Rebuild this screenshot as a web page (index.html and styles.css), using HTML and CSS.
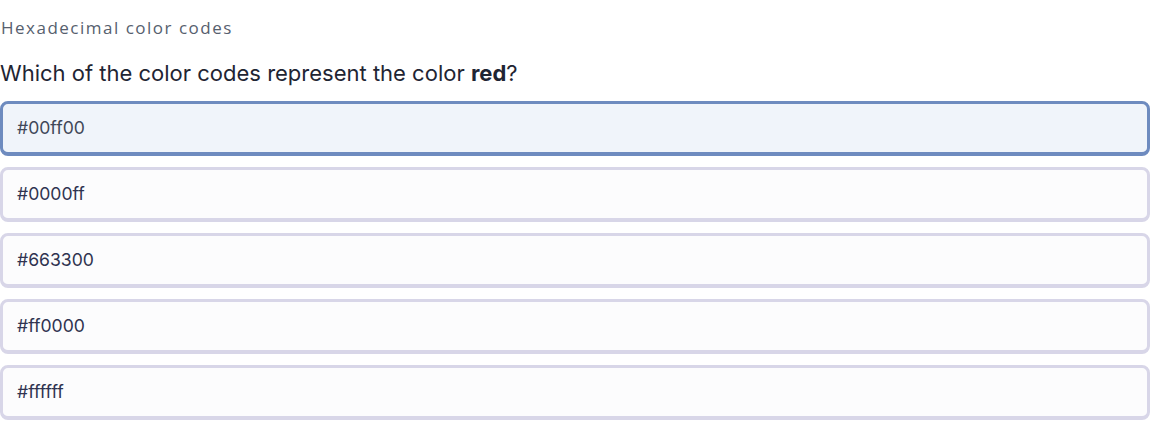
FILE: index.html
```html
<!DOCTYPE html>
<html lang="en">
<head>
<meta charset="utf-8">
<title>Hexadecimal color codes</title>
<link rel="stylesheet" href="styles.css">
</head>
<body>
<div class="quiz">
  <div class="topic">Hexadecimal color codes</div>
  <div class="question">Which of the color codes represent the color <strong>red</strong>?</div>
  <div class="options">
    <div class="option selected">#00ff00</div>
    <div class="option">#0000ff</div>
    <div class="option">#663300</div>
    <div class="option">#ff0000</div>
    <div class="option">#ffffff</div>
  </div>
</div>
</body>
</html>
```

FILE: styles.css
```css
html, body {
  margin: 0;
  padding: 0;
  background: #ffffff;
}

.quiz {
  width: 1150px;
  padding-top: 18px;
  font-family: Inter, "Liberation Sans", sans-serif;
}

.topic {
  font-family: "Open Sans", Lato, sans-serif;
  font-size: 17px;
  line-height: 20px;
  letter-spacing: 1.5px;
  color: #56606e;
  padding-left: 1px;
}

.question {
  margin-top: 22px;
  font-size: 22px;
  line-height: 26px;
  color: #1f2533;
}

.question strong {
  font-weight: 700;
}

.options {
  margin-top: 15px;
  display: flex;
  flex-direction: column;
  gap: 11px;
}

.option {
  box-sizing: border-box;
  height: 55px;
  display: flex;
  align-items: center;
  padding: 0 0 1px 14px;
  border: 3px solid #d8d6e8;
  border-bottom-width: 4px;
  border-radius: 8px;
  background: #fcfcfd;
  font-size: 17.6px;
  color: #2f3350;
}

.option.selected {
  border-color: #6e8bbf;
  background: #f0f4fa;
  color: #3f4758;
}
```
